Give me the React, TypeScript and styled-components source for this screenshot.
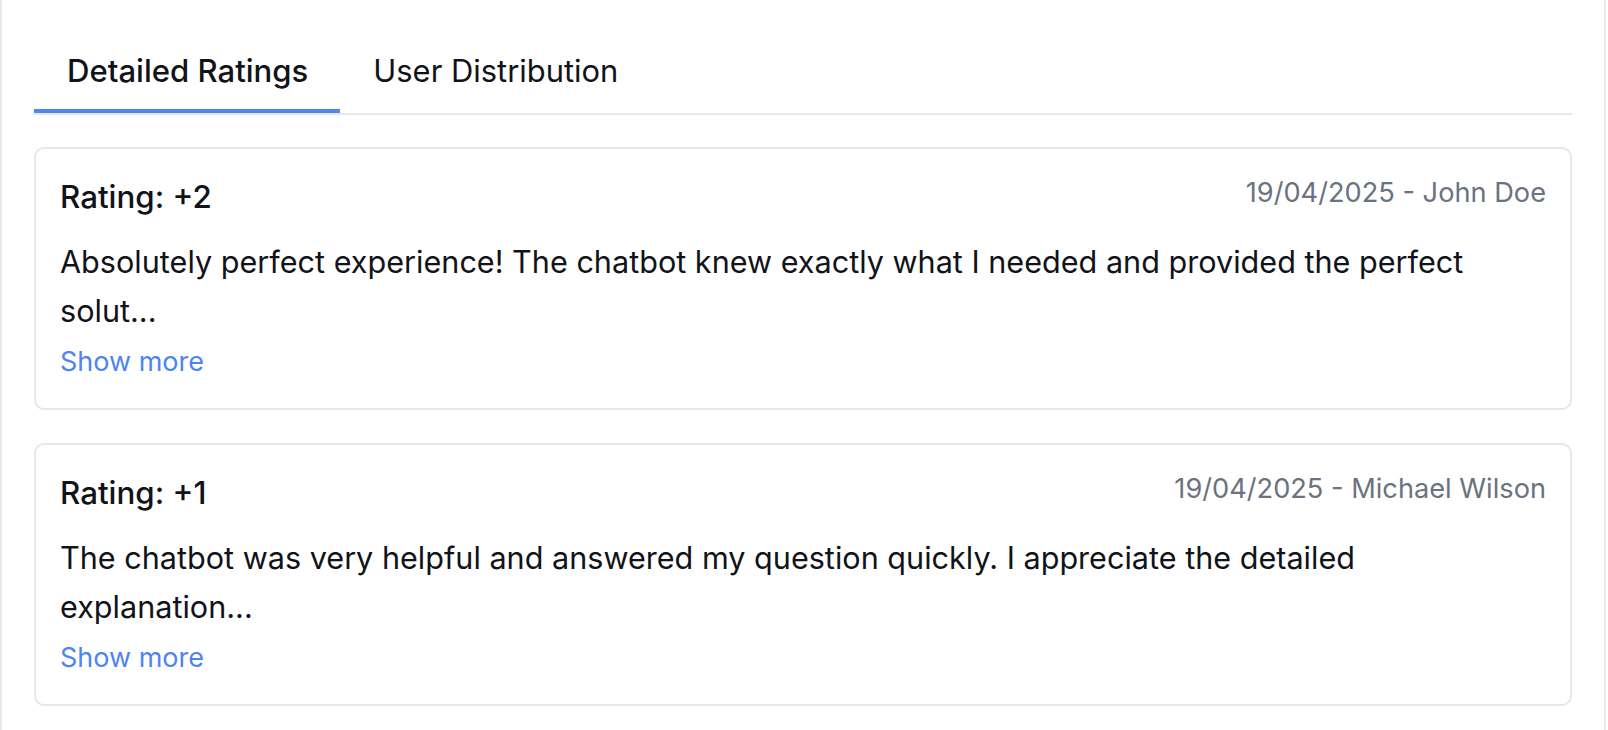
import React, { useState } from "react";
import styled, { createGlobalStyle } from "styled-components";

const GlobalStyle = createGlobalStyle`
  * { box-sizing: border-box; }
  html, body { margin: 0; padding: 0; background: #ffffff; }
  body {
    font-family: Inter, "Noto Sans", "Liberation Sans", sans-serif;
    color: #111318;
    -webkit-font-smoothing: antialiased;
  }
`;

const Page = styled.div`
  width: 1606px;
  min-height: 730px;
  border-left: 2px solid #e8e8ea;
  border-right: 2px solid #e8e8ea;
  padding: 33px 32px 28px 32px;
`;

const TabList = styled.div`
  display: flex;
  border-bottom: 2px solid #e5e7eb;
`;

const Tab = styled.button<{ $active?: boolean }>`
  appearance: none;
  background: none;
  border: none;
  border-bottom: 4px solid ${(p) => (p.$active ? "#5084ee" : "transparent")};
  margin: 0;
  padding: 15px 32px 15px 33px;
  font-family: inherit;
  font-size: ${(p) => (p.$active ? "31.1px" : "30.9px")};
  line-height: 46px;
  font-weight: ${(p) => (p.$active ? 500 : 400)};
  color: #111318;
  cursor: pointer;
`;

const CardList = styled.div`
  display: flex;
  flex-direction: column;
  gap: 33px;
  margin-top: 32px;
`;

const Card = styled.div`
  border: 2px solid #e5e7eb;
  border-radius: 10px;
  padding: 24px 24px 26px 24px;
  background: #ffffff;
`;

const CardHeader = styled.div`
  display: flex;
  justify-content: space-between;
  align-items: flex-start;
`;

const Rating = styled.div`
  font-size: 31.3px;
  line-height: 48px;
  font-weight: 500;
  color: #111318;
`;

const Meta = styled.div`
  font-size: 27.2px;
  line-height: 40px;
  color: #6b7280;
`;

const Body = styled.p`
  margin: 17px 0 0 0;
  font-size: 30.6px;
  line-height: 48.5px;
  color: #111318;
`;

const ShowMore = styled.button`
  appearance: none;
  background: none;
  border: none;
  padding: 0;
  margin-top: 7px;
  display: block;
  font-family: inherit;
  font-size: 27px;
  line-height: 40px;
  color: #4f84f0;
  cursor: pointer;
`;

type Review = { rating: string; date: string; author: string; text: string };

const reviews: Review[] = [
  {
    rating: "+2",
    date: "19/04/2025",
    author: "John Doe",
    text: "Absolutely perfect experience! The chatbot knew exactly what I needed and provided the perfect solut...",
  },
  {
    rating: "+1",
    date: "19/04/2025",
    author: "Michael Wilson",
    text: "The chatbot was very helpful and answered my question quickly. I appreciate the detailed explanation...",
  },
];

export default function App() {
  const [tab, setTab] = useState(0);
  return (
    <>
      <GlobalStyle />
      <Page>
        <TabList>
          <Tab $active={tab === 0} onClick={() => setTab(0)}>
            Detailed Ratings
          </Tab>
          <Tab $active={tab === 1} onClick={() => setTab(1)}>
            User Distribution
          </Tab>
        </TabList>
        <CardList>
          {reviews.map((r) => (
            <Card key={r.author}>
              <CardHeader>
                <Rating>Rating: {r.rating}</Rating>
                <Meta>
                  {r.date} - {r.author}
                </Meta>
              </CardHeader>
              <Body>{r.text}</Body>
              <ShowMore>Show more</ShowMore>
            </Card>
          ))}
        </CardList>
      </Page>
    </>
  );
}
